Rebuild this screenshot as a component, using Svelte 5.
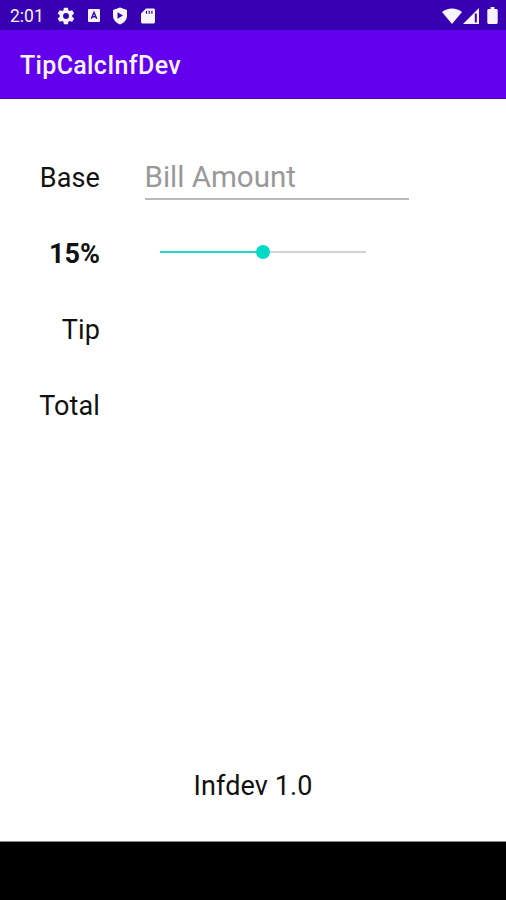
<script>
  const min = 0;
  const max = 30;
  let amount = $state("");
  let percent = $state(15);

  let position = $derived(((percent - min) / (max - min)) * 100);
  let tip = $derived(amount ? ((Number(amount) * percent) / 100).toFixed(2) : "");
  let total = $derived(amount ? (Number(amount) + Number(tip)).toFixed(2) : "");
</script>

<div class="screen">
  <div class="status-bar">
    <span class="clock">2:01</span>
    <div class="notifications">
      <svg width="20" height="20" viewBox="0 0 24 24" fill="currentColor">
        <path fill-rule="evenodd" d="M19.4 13a7 7 0 0 0 0-2l2.1-1.6a.5.5 0 0 0 .1-.7l-2-3.4a.5.5 0 0 0-.6-.2l-2.5 1a7.5 7.5 0 0 0-1.7-1l-.4-2.6a.5.5 0 0 0-.5-.4h-4a.5.5 0 0 0-.5.4L9 5.1a7.5 7.5 0 0 0-1.7 1l-2.5-1a.5.5 0 0 0-.6.2l-2 3.4a.5.5 0 0 0 .1.7L4.5 11a7 7 0 0 0 0 2l-2.2 1.6a.5.5 0 0 0-.1.7l2 3.4a.5.5 0 0 0 .6.2l2.5-1a7.5 7.5 0 0 0 1.7 1l.4 2.6a.5.5 0 0 0 .5.4h4a.5.5 0 0 0 .5-.4l.4-2.6a7.5 7.5 0 0 0 1.7-1l2.5 1a.5.5 0 0 0 .6-.2l2-3.4a.5.5 0 0 0-.1-.7zM12 8.5a3.5 3.5 0 1 1 0 7 3.5 3.5 0 0 1 0-7z" />
      </svg>
      <svg width="12" height="13" viewBox="0 0 12 13">
        <rect width="12" height="13" rx="1" fill="currentColor" />
        <path d="M3.3 9.8 6 3.3l2.7 6.5M4.3 7.7h3.4" fill="none" stroke="#3700b3" stroke-width="1.4" />
      </svg>
      <svg width="16" height="18" viewBox="0 0 16 18">
        <path d="M8 .5 15 3v5.5c0 4-2.8 7.5-7 9-4.2-1.5-7-5-7-9V3z" fill="currentColor" />
        <path d="M5.5 5.2v6.6L11 8.5z" fill="#3700b3" />
      </svg>
      <svg class="card" width="14" height="16" viewBox="0 0 14 16">
        <path d="M5 .5h7.5c.8 0 1.5.6 1.5 1.5v12c0 .9-.7 1.5-1.5 1.5h-11C.7 15.5 0 14.9 0 14V5.5z" fill="currentColor" />
        <path d="M5.500 2.8v3M8.2 2.8v3M10.9 2.8v3" stroke="#3700b3" stroke-width="1.2" />
      </svg>
    </div>
    <div class="system">
      <svg width="20" height="16" viewBox="0 0 20 16" fill="currentColor">
        <path d="M0 4C5.5-.8 14.5-.8 20 4L10 16z" />
      </svg>
      <svg width="16" height="16" viewBox="0 0 16 16">
        <path d="M0 16 16 0v16z" fill="currentColor" />
        <path d="M12.8 5.5v9" stroke="#3700b3" stroke-width="2" />
      </svg>
      <svg class="battery" width="11" height="17" viewBox="0 0 11 18" fill="currentColor">
        <path d="M3.5 0h4v2H10l1 1v14l-1 1H1l-1-1V3l1-1h2.5z" />
      </svg>
    </div>
  </div>

  <header>TipCalcInfDev</header>

  <main>
    <div class="row">
      <label for="amount">Base</label>
      <input id="amount" class="amount" type="text" placeholder="Bill Amount" bind:value={amount} />
    </div>
    <div class="row">
      <label class="percent" for="percent">{percent}%</label>
      <div class="slider">
        <div class="fill" style="width: {position}%"></div>
        <div class="thumb" style="left: {position}%"></div>
        <input id="percent" class="range" type="range" {min} {max} bind:value={percent} />
      </div>
    </div>
    <div class="row">
      <span class="label">Tip</span>
      <span class="value">{tip}</span>
    </div>
    <div class="row">
      <span class="label">Total</span>
      <span class="value">{total}</span>
    </div>
    <footer>Infdev 1.0</footer>
  </main>

  <div class="nav-bar"></div>
</div>

<style>
  .screen {
    width: 506px;
    height: 900px;
    display: flex;
    flex-direction: column;
    overflow: hidden;
    background: #fff;
    color: #111;
    font-family: Roboto, sans-serif;
  }
  .status-bar {
    height: 30px;
    display: flex;
    align-items: center;
    padding: 1px 8px 0 10px;
    box-sizing: border-box;
    background: #3700b3;
    color: #f8f4ff;
  }
  .clock {
    width: 46px;
    font-size: 17.5px;
    line-height: 30px;
  }
  .notifications {
    display: flex;
    align-items: center;
    gap: 12px;
  }
  .card { margin-left: 1px; }
  .system {
    display: flex;
    align-items: center;
    gap: 1px;
    margin-left: auto;
  }
  .battery { margin-left: 7px; }
  header {
    height: 69px;
    padding: 2px 20px 0;
    box-sizing: border-box;
    border-bottom: 1px solid #4b00c8;
    background: #6200ee;
    color: #f8f4ff;
    font-size: 25px;
    font-weight: 500;
    letter-spacing: 0.33px;
    line-height: 68px;
  }
  main {
    flex: 1;
    display: flex;
    flex-direction: column;
    padding-top: 41px;
  }
  .row {
    height: 76px;
    display: flex;
    align-items: center;
  }
  label, .label {
    width: 100px;
    margin-right: 44.5px;
    font-size: 27px;
    letter-spacing: 0.1px;
    text-align: right;
  }
  .percent { font-weight: 700; letter-spacing: 0; }
  .amount {
    width: 264px;
    height: 45px;
    padding: 1px 0 0;
    box-sizing: border-box;
    border: none;
    border-bottom: 2px solid #b9b9b9;
    outline: none;
    background: none;
    color: #111;
    font: 29.5px Roboto, sans-serif;
    margin-bottom: 1px;
  }
  .amount::placeholder { color: #999; opacity: 1; }
  .slider {
    position: relative;
    width: 206px;
    height: 2px;
    margin: 0 0 4px 15px;
    background: #d3d3d3;
  }
  .fill {
    height: 2px;
    background: #1fd8c6;
  }
  .thumb {
    position: absolute;
    top: 1px;
    width: 14px;
    height: 14px;
    border-radius: 50%;
    background: #03dac5;
    transform: translate(-50%, -50%);
  }
  .range {
    position: absolute;
    top: -10px;
    left: 0;
    width: 100%;
    height: 22px;
    margin: 0;
    opacity: 0;
  }
  .value { font-size: 27px; }
  footer {
    margin: auto 0 39px;
    font-size: 27px;
    letter-spacing: 0.1px;
    text-align: center;
  }
  .nav-bar {
    height: 59px;
    box-sizing: border-box;
    border-top: 1px solid #8a8a8a;
    background: #000;
  }
</style>
